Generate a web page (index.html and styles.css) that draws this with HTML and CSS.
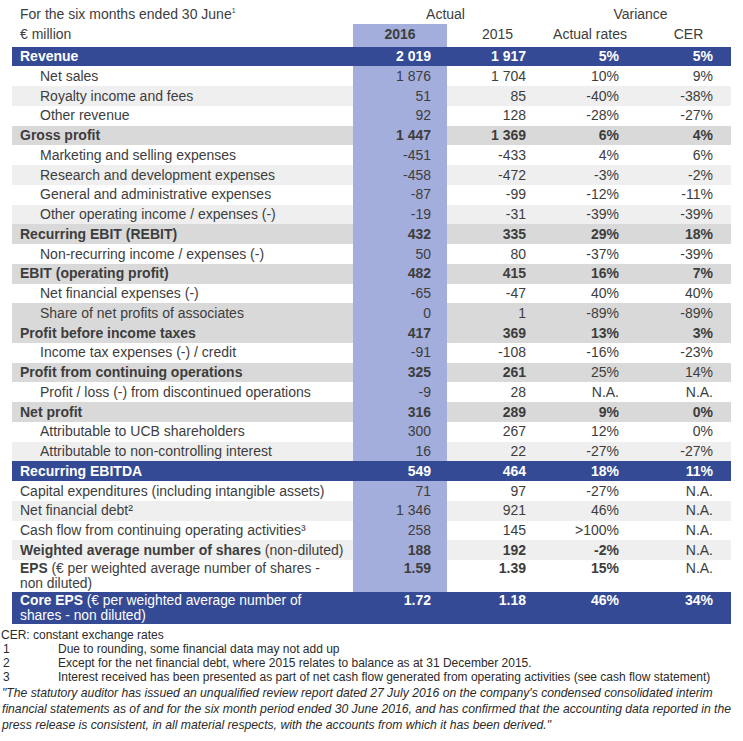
FILE: index.html
```html
<!DOCTYPE html>
<html>
<head>
<meta charset="utf-8">
<link rel="stylesheet" href="styles.css">
</head>
<body>
<table class="fin">
  <colgroup>
    <col class="w-label"><col class="w-16"><col class="w-15"><col class="w-rates"><col class="w-cer">
  </colgroup>
  <thead>
    <tr class="h1">
      <th class="lab">For the six months ended 30 June<sup>1</sup></th>
      <th colspan="2" class="grp grp-actual">Actual</th>
      <th colspan="2" class="grp grp-var">Variance</th>
    </tr>
    <tr class="h2">
      <th class="lab">€ million</th>
      <th class="c16 yr">2016</th>
      <th class="yr yr-15">2015</th>
      <th class="yr">Actual rates</th>
      <th class="yr yr-cer">CER</th>
    </tr>
  </thead>
  <tbody>
    <tr class="navy"><td class="lab">Revenue</td><td class="c16">2 019</td><td>1 917</td><td class="r">5%</td><td class="c">5%</td></tr>
    <tr><td class="lab ind">Net sales</td><td class="c16">1 876</td><td>1 704</td><td class="r">10%</td><td class="c">9%</td></tr>
    <tr class="lt"><td class="lab ind">Royalty income and fees</td><td class="c16">51</td><td>85</td><td class="r">-40%</td><td class="c">-38%</td></tr>
    <tr><td class="lab ind">Other revenue</td><td class="c16">92</td><td>128</td><td class="r">-28%</td><td class="c">-27%</td></tr>
    <tr class="dk b"><td class="lab">Gross profit</td><td class="c16">1 447</td><td>1 369</td><td class="r">6%</td><td class="c">4%</td></tr>
    <tr><td class="lab ind">Marketing and selling expenses</td><td class="c16">-451</td><td>-433</td><td class="r">4%</td><td class="c">6%</td></tr>
    <tr class="lt"><td class="lab ind">Research and development expenses</td><td class="c16">-458</td><td>-472</td><td class="r">-3%</td><td class="c">-2%</td></tr>
    <tr><td class="lab ind">General and administrative expenses</td><td class="c16">-87</td><td>-99</td><td class="r">-12%</td><td class="c">-11%</td></tr>
    <tr class="lt"><td class="lab ind">Other operating income / expenses (-)</td><td class="c16">-19</td><td>-31</td><td class="r">-39%</td><td class="c">-39%</td></tr>
    <tr class="dk b"><td class="lab">Recurring EBIT (REBIT)</td><td class="c16">432</td><td>335</td><td class="r">29%</td><td class="c">18%</td></tr>
    <tr><td class="lab ind">Non-recurring income / expenses (-)</td><td class="c16">50</td><td>80</td><td class="r">-37%</td><td class="c">-39%</td></tr>
    <tr class="dk b"><td class="lab">EBIT (operating profit)</td><td class="c16">482</td><td>415</td><td class="r">16%</td><td class="c">7%</td></tr>
    <tr><td class="lab ind">Net financial expenses (-)</td><td class="c16">-65</td><td>-47</td><td class="r">40%</td><td class="c">40%</td></tr>
    <tr class="dk"><td class="lab ind">Share of net profits of associates</td><td class="c16">0</td><td>1</td><td class="r">-89%</td><td class="c">-89%</td></tr>
    <tr class="dk b"><td class="lab">Profit before income taxes</td><td class="c16">417</td><td>369</td><td class="r">13%</td><td class="c">3%</td></tr>
    <tr><td class="lab ind">Income tax expenses (-) / credit</td><td class="c16">-91</td><td>-108</td><td class="r">-16%</td><td class="c">-23%</td></tr>
    <tr class="dk b2"><td class="lab">Profit from continuing operations</td><td class="c16">325</td><td>261</td><td class="r">25%</td><td class="c">14%</td></tr>
    <tr><td class="lab ind">Profit / loss (-) from discontinued operations</td><td class="c16">-9</td><td>28</td><td class="r">N.A.</td><td class="c">N.A.</td></tr>
    <tr class="dk b"><td class="lab">Net profit</td><td class="c16">316</td><td>289</td><td class="r">9%</td><td class="c">0%</td></tr>
    <tr><td class="lab ind">Attributable to UCB shareholders</td><td class="c16">300</td><td>267</td><td class="r">12%</td><td class="c">0%</td></tr>
    <tr class="lt"><td class="lab ind">Attributable to non-controlling interest</td><td class="c16">16</td><td>22</td><td class="r">-27%</td><td class="c">-27%</td></tr>
    <tr class="navy"><td class="lab">Recurring EBITDA</td><td class="c16">549</td><td>464</td><td class="r">18%</td><td class="c">11%</td></tr>
    <tr><td class="lab">Capital expenditures (including intangible assets)</td><td class="c16">71</td><td>97</td><td class="r">-27%</td><td class="c">N.A.</td></tr>
    <tr class="lt"><td class="lab">Net financial debt²</td><td class="c16">1 346</td><td>921</td><td class="r">46%</td><td class="c">N.A.</td></tr>
    <tr><td class="lab">Cash flow from continuing operating activities³</td><td class="c16">258</td><td>145</td><td class="r">&gt;100%</td><td class="c">N.A.</td></tr>
    <tr class="lt b3"><td class="lab"><strong>Weighted average number of shares</strong> (non-diluted)</td><td class="c16">188</td><td>192</td><td class="r">-2%</td><td class="c">N.A.</td></tr>
    <tr class="two b3"><td class="lab"><span class="ln"><strong>EPS</strong> (€ per weighted average number of shares -</span><span class="ln">non diluted)</span></td><td class="c16">1.59</td><td>1.39</td><td class="r">15%</td><td class="c">N.A.</td></tr>
    <tr class="navy two"><td class="lab"><span class="ln"><strong>Core EPS</strong> (€ per weighted average number of</span><span class="ln">shares - non diluted)</span></td><td class="c16">1.72</td><td>1.18</td><td class="r">46%</td><td class="c">34%</td></tr>
  </tbody>
</table>

<div class="notes">
  <p class="cer">CER: constant exchange rates</p>
  <ol class="fn">
    <li><span class="n">1</span><span>Due to rounding, some financial data may not add up</span></li>
    <li><span class="n">2</span><span>Except for the net financial debt, where 2015 relates to balance as at 31 December 2015.</span></li>
    <li><span class="n">3</span><span>Interest received has been presented as part of net cash flow generated from operating activities (see cash flow statement)</span></li>
  </ol>
  <p class="quote"><span class="ln">"The statutory auditor has issued an unqualified review report dated 27 July 2016 on the company's condensed consolidated interim</span><span class="ln">financial statements as of and for the six month period ended 30 June 2016, and has confirmed that the accounting data reported in the</span><span class="ln">press release is consistent, in all material respects, with the accounts from which it has been derived."</span></p>
</div>
</body>
</html>
```

FILE: styles.css
```css
html, body {
  margin: 0;
  padding: 0;
  background: #ffffff;
}
body {
  font-family: "Liberation Sans", Arial, sans-serif;
  color: #3d3d3d;
  width: 743px;
  height: 741px;
  overflow: hidden;
}
.fin {
  margin-left: 12px;
  width: 719px;
  border-collapse: collapse;
  table-layout: fixed;
  font-size: 14px;
}
.w-label { width: 341px; }
.w-16 { width: 94px; }
.w-15 { width: 95px; }
.w-rates { width: 96px; }
.w-cer { width: 93px; }

.fin th, .fin td {
  padding: 0;
  white-space: nowrap;
  font-weight: normal;
}
.fin td { text-align: right; vertical-align: middle; }
.fin td:nth-child(2) { padding-right: 16px; }
.fin td:nth-child(3) { padding-right: 16px; }
.fin td.r { padding-right: 19px; }
.fin td.c { padding-right: 18px; }
.fin .lab {
  text-align: left;
  padding-left: 8px;
}
.fin .lab.ind { padding-left: 28px; }

.h1 { height: 24.3px; }
.h1 th {
  vertical-align: top;
  line-height: 16px;
  padding-top: 6px;
}
.h1 sup { font-size: 7px; vertical-align: 6px; line-height: 0; }
.grp { text-align: center; }
.grp-actual { padding-right: 4px !important; }
.grp-var { padding-left: 8px !important; }
.h2 { height: 22.4px; }
.h2 th {
  vertical-align: top;
  line-height: 16px;
  padding-top: 2px;
}
.yr { text-align: center; }
.yr-15 { padding-left: 6px !important; }
.yr-cer { padding-left: 8px !important; }
.h2 .c16 { font-weight: bold; }

.fin tbody tr { height: 19.76px; }
.fin tbody td { line-height: 15px; }

.c16 { background: #a4aedc; }

.lt td { background: #efefef; }
.dk td { background: #d9d9d9; }
.lt td.c16, .dk td.c16 { background: #a4aedc; }

.b td { font-weight: bold; }
.b2 td:nth-child(-n+3) { font-weight: bold; }
.b3 td:nth-child(-n+4) { font-weight: bold; }
.b3 td.lab { font-weight: normal; }
.b3 td.lab strong { font-weight: bold; }

.navy td, .navy td.c16 {
  background: #344a94;
  color: #ffffff;
  font-weight: bold;
}
.navy.two td.lab { font-weight: normal; }
.navy td.lab strong { font-weight: bold; }

.fin tbody tr.two { height: 32px; }
.two td {
  vertical-align: top;
  line-height: 15.5px;
  padding-top: 1px;
}
.two td.lab {
  font-size: 13.8px;
}
.ln { display: block; }

.notes {
  margin-top: 4px;
  font-size: 12px;
  color: #2a2a2a;
}
.cer { margin: 0 0 0 1px; line-height: 14px; }
.fn { list-style: none; margin: 0; padding: 0; }
.fn li { display: flex; line-height: 14px; }
.fn .n { width: 58px; padding-left: 3px; box-sizing: border-box; flex: none; }
.quote {
  margin: 1px 0 0 2px;
  font-size: 12.2px;
  font-style: italic;
  line-height: 16px;
  white-space: nowrap;
}
```
